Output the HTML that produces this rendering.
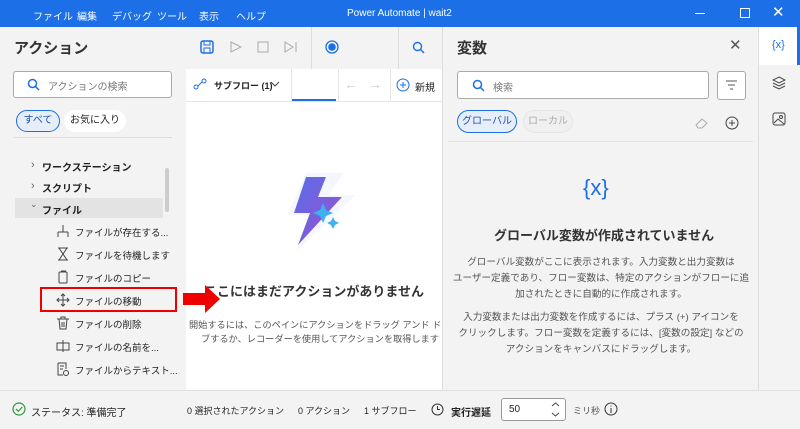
<!DOCTYPE html>
<html><head><meta charset="utf-8"><style>
*{box-sizing:border-box;margin:0;padding:0}
body{width:800px;height:429px;overflow:hidden;font-family:"Liberation Sans","Noto Sans CJK JP",sans-serif;background:#f3f3f3;position:relative;color:#222}
.a{position:absolute}
.t{font-size:11px;white-space:nowrap}
.ic{position:absolute;left:56px}
</style></head><body>
<div class="a" style="left:0;top:0;width:800px;height:27px;background:#1c6fe6;color:#fff">
<span class="a t" style="left:33px;top:8px;font-size:10px">ファイル</span>
<span class="a t" style="left:77px;top:8px;font-size:10px">編集</span>
<span class="a t" style="left:112px;top:8px;font-size:10px">デバッグ</span>
<span class="a t" style="left:157px;top:8px;font-size:10px">ツール</span>
<span class="a t" style="left:199px;top:8px;font-size:10px">表示</span>
<span class="a t" style="left:236px;top:8px;font-size:10px">ヘルプ</span>
<span class="a t" style="left:347px;top:8px;font-size:10px">Power Automate | wait2</span>
<span class="a" style="left:695px;top:13px;width:10px;border-top:1px solid #fff"></span>
<span class="a" style="left:740px;top:8px;width:10px;height:10px;border:1px solid #fff"></span>
<span class="a" style="left:772px;top:3px;font-size:15px">✕</span>
</div>
<!-- left -->
<div class="a t" style="left:14px;top:37px;font-size:15px;font-weight:bold;color:#333">アクション</div>
<div class="a" style="left:13px;top:71px;width:159px;height:27px;background:#fff;border:1px solid #aaa;border-radius:3px"></div>
<svg class="a" style="left:27px;top:78px" width="13" height="13"><circle cx="5.5" cy="5.5" r="4" fill="none" stroke="#1c6fe6" stroke-width="1.5"/><path d="M8.5 8.5L12 12" stroke="#1c6fe6" stroke-width="1.5"/></svg>
<span class="a t" style="left:48px;top:78px;font-size:10px;color:#777">アクションの検索</span>
<div class="a t" style="left:16px;top:110px;width:44px;height:22px;border:1px solid #1c6fe6;border-radius:11px;background:#e6eefa;color:#1c4fb0;font-size:10px;text-align:center;line-height:20px">すべて</div>
<div class="a t" style="left:64px;top:110px;width:62px;height:22px;border-radius:11px;background:#fff;font-size:10px;text-align:center;line-height:22px">お気に入り</div>
<div class="a" style="left:14px;top:137px;width:158px;border-top:1px solid #ddd"></div>
<span class="a t" style="left:31px;top:159px;color:#666">›</span><span class="a t" style="left:42px;top:159px;font-weight:bold;font-size:10px">ワークステーション</span>
<span class="a t" style="left:31px;top:180px;color:#666">›</span><span class="a t" style="left:42px;top:180px;font-weight:bold;font-size:10px">スクリプト</span>
<div class="a" style="left:15px;top:198px;width:148px;height:20px;background:#e3e3e3"></div>
<span class="a t" style="left:30px;top:199px;color:#666;font-size:9px">⌄</span><span class="a t" style="left:42px;top:202px;font-weight:bold;font-size:10px">ファイル</span>
<div class="a" style="left:165px;top:168px;width:4px;height:44px;background:#ccc;border-radius:2px"></div>
<svg class="ic" style="top:224px" width="14" height="14" fill="none" stroke="#444"><path d="M7 1V8M2 8H12M2 8V13M12 8V13"/></svg>
<span class="a t" style="left:75px;top:225px;font-size:9.5px">ファイルが存在する...</span>
<svg class="ic" style="top:247px" width="14" height="14" fill="none" stroke="#444"><path d="M2 1H12M2 13H12M3 1L11 13M11 1L3 13"/></svg>
<span class="a t" style="left:75px;top:248px;font-size:9.5px">ファイルを待機します</span>
<svg class="ic" style="top:270px" width="14" height="14" fill="none" stroke="#444"><rect x="3" y="2" width="8" height="11" rx="1"/><path d="M5 1H10"/></svg>
<span class="a t" style="left:75px;top:271px;font-size:9.5px">ファイルのコピー</span>
<svg class="ic" style="top:293px" width="14" height="14" fill="none" stroke="#444"><path d="M7 1V13M1 7H13M5 3L7 1L9 3M5 11L7 13L9 11M3 5L1 7L3 9M11 5L13 7L11 9"/></svg>
<span class="a t" style="left:75px;top:294px;font-size:9.5px">ファイルの移動</span>
<svg class="ic" style="top:316px" width="14" height="14" fill="none" stroke="#444"><path d="M1 3H13M5 3V1H9V3M3 3L4 13H10L11 3M6 6V11M8 6V11"/></svg>
<span class="a t" style="left:75px;top:317px;font-size:9.5px">ファイルの削除</span>
<svg class="ic" style="top:339px" width="14" height="14" fill="none" stroke="#444"><rect x="1" y="4" width="12" height="7"/><path d="M7 1V13"/></svg>
<span class="a t" style="left:75px;top:340px;font-size:9.5px">ファイルの名前を...</span>
<svg class="ic" style="top:362px" width="14" height="14" fill="none" stroke="#444"><path d="M2 1H10V7M2 1V13H7M4 4H8M4 7H7"/><circle cx="10" cy="11" r="2.5"/></svg>
<span class="a t" style="left:75px;top:363px;font-size:9.5px">ファイルからテキスト...</span>
<!-- middle -->
<div class="a" style="left:186px;top:27px;width:256px;height:363px;background:#fff;overflow:hidden">
<div class="a t" style="left:18px;top:254px;font-size:13px;font-weight:bold;color:#333">ここにはまだアクションがありません</div>
<div class="a t" style="left:3px;top:290px;font-size:9.2px;color:#555">開始するには、このペインにアクションをドラッグ アンド ドロ</div>
<div class="a t" style="left:15px;top:304px;font-size:9.2px;color:#555">ブするか、レコーダーを使用してアクションを取得します</div>
</div>
<div class="a" style="left:186px;top:27px;width:256px;height:42px;background:#f3f3f3"></div>
<div class="a" style="left:186px;top:69px;width:256px;height:33px;background:#fff;border-bottom:1px solid #e6e6e6"></div>
<svg class="a" style="left:200px;top:40px" width="14" height="14"><rect x="1" y="1" width="12" height="12" rx="2" fill="none" stroke="#1c6fe6" stroke-width="1.5"/><rect x="4" y="1" width="6" height="4" fill="none" stroke="#1c6fe6"/><rect x="4" y="8" width="6" height="5" fill="none" stroke="#1c6fe6"/></svg>
<svg class="a" style="left:230px;top:41px" width="12" height="12"><path d="M1 1L11 6L1 11Z" fill="none" stroke="#aaa"/></svg>
<svg class="a" style="left:257px;top:41px" width="12" height="12"><rect x="1" y="1" width="10" height="10" fill="none" stroke="#aaa"/></svg>
<svg class="a" style="left:284px;top:41px" width="14" height="12"><path d="M1 1L9 6L1 11Z M12 1V11" fill="none" stroke="#aaa"/></svg>
<div class="a" style="left:311px;top:27px;width:1px;height:42px;background:#ddd"></div>
<svg class="a" style="left:325px;top:40px" width="14" height="14"><circle cx="7" cy="7" r="6" fill="none" stroke="#1c6fe6" stroke-width="1.3"/><circle cx="7" cy="7" r="3.8" fill="#1c6fe6"/></svg>
<div class="a" style="left:398px;top:27px;width:1px;height:42px;background:#ddd"></div>
<svg class="a" style="left:412px;top:41px" width="13" height="13"><circle cx="5.5" cy="5.5" r="4" fill="none" stroke="#1c6fe6" stroke-width="1.4"/><path d="M8.5 8.5L12 12" stroke="#1c6fe6" stroke-width="1.4"/></svg>
<svg class="a" style="left:193px;top:78px" width="14" height="12"><circle cx="3" cy="9" r="2" fill="none" stroke="#1c6fe6"/><circle cx="11" cy="3" r="2" fill="none" stroke="#1c6fe6"/><path d="M5 8L9 4" stroke="#1c6fe6"/></svg>
<span class="a t" style="left:214px;top:79px;font-size:9px;font-weight:bold">サブフロー (1)</span>
<svg class="a" style="left:270px;top:81px" width="10" height="6"><path d="M1 1L5 5L9 1" fill="none" stroke="#444"/></svg>
<div class="a" style="left:291px;top:69px;width:1px;height:33px;background:#e6e6e6"></div>
<div class="a" style="left:292px;top:99px;width:44px;height:2px;background:#1c6fe6"></div>
<div class="a" style="left:338px;top:69px;width:1px;height:33px;background:#e6e6e6"></div>
<span class="a t" style="left:344px;top:76px;font-size:14px;color:#ccc">←</span>
<span class="a t" style="left:368px;top:76px;font-size:14px;color:#ccc">→</span>
<div class="a" style="left:390px;top:69px;width:1px;height:33px;background:#e6e6e6"></div>
<svg class="a" style="left:396px;top:78px" width="14" height="14"><circle cx="7" cy="7" r="6" fill="none" stroke="#1c6fe6"/><path d="M7 4V10M4 7H10" stroke="#1c6fe6"/></svg>
<span class="a t" style="left:415px;top:79px;font-size:10px">新規</span>
<svg class="a" style="left:266px;top:165px" width="110" height="90"><defs><linearGradient id="g" x1="0" y1="0" x2="1" y2="1"><stop offset="0" stop-color="#5a6ee8"/><stop offset="1" stop-color="#9a4fd0"/></linearGradient></defs><path d="M40 8H78L62 30H90L30 86L44 50H22Z" fill="#f4f7fd"/><path d="M40 12H60L52 32H76L32 80L44 48H28Z" fill="url(#g)"/><path d="M57 38L60 45L67 48L60 51L57 58L54 51L47 48L54 45Z" fill="#3fb0f0"/><path d="M67 52L69 56L73 58L69 60L67 64L65 60L61 58L65 56Z" fill="#3fb0f0"/></svg>
<div class="a" style="left:40px;top:287px;width:137px;height:25px;border:2px solid #e00"></div>
<svg class="a" style="left:183px;top:285px" width="38" height="28"><path d="M0 8H22V0L37 14L22 28V20H0Z" fill="#e00"/></svg>
<!-- right -->
<div class="a" style="left:442px;top:27px;width:1px;height:363px;background:#ddd"></div>
<div class="a t" style="left:457px;top:37px;font-size:15px;font-weight:bold;color:#333">変数</div>
<span class="a t" style="left:729px;top:36px;font-size:15px;color:#555">✕</span>
<div class="a" style="left:457px;top:71px;width:252px;height:28px;background:#fff;border:1px solid #aaa;border-radius:3px"></div>
<svg class="a" style="left:472px;top:79px" width="13" height="13"><circle cx="5.5" cy="5.5" r="4" fill="none" stroke="#1c6fe6" stroke-width="1.5"/><path d="M8.5 8.5L12 12" stroke="#1c6fe6" stroke-width="1.5"/></svg>
<span class="a t" style="left:493px;top:79px;font-size:10px;color:#777">検索</span>
<div class="a" style="left:717px;top:71px;width:29px;height:29px;background:#fff;border:1px solid #aaa;border-radius:3px"></div>
<svg class="a" style="left:725px;top:80px" width="13" height="10"><path d="M1 1H12M3 5H10M5 9H8" stroke="#555"/></svg>
<div class="a t" style="left:457px;top:110px;width:60px;height:23px;border:1px solid #1c6fe6;border-radius:12px;background:#e6eefa;color:#1c4fb0;font-size:10px;text-align:center;line-height:21px">グローバル</div>
<div class="a t" style="left:523px;top:110px;width:50px;height:23px;border-radius:12px;background:#f0f0f0;border:1px solid #e6e6e6;color:#aaa;font-size:10px;text-align:center;line-height:21px">ローカル</div>
<svg class="a" style="left:695px;top:117px" width="14" height="12"><path d="M1 8L7 2L12 6L7 11H3Z" fill="none" stroke="#aaa"/></svg>
<svg class="a" style="left:725px;top:116px" width="14" height="14"><circle cx="7" cy="7" r="6" fill="none" stroke="#444"/><path d="M7 4V10M4 7H10" stroke="#444"/></svg>
<div class="a" style="left:448px;top:141px;width:305px;border-top:1px solid #e0e0e0"></div>
<div class="a t" style="left:583px;top:175px;font-size:22px;color:#1c6fe6">{x}</div>
<div class="a t" style="left:494px;top:225px;font-size:13px;font-weight:bold;color:#333">グローバル変数が作成されていません</div>
<div class="a" style="left:448px;top:255px;width:306px;text-align:center;font-size:9.6px;color:#555;line-height:16px;white-space:nowrap">グローバル変数がここに表示されます。入力変数と出力変数は<br>ユーザー定義であり、フロー変数は、特定のアクションがフローに追<br>加されたときに自動的に作成されます。</div>
<div class="a" style="left:448px;top:310px;width:306px;text-align:center;font-size:9.6px;color:#555;line-height:16px;white-space:nowrap">入力変数または出力変数を作成するには、プラス (+) アイコンを<br>クリックします。フロー変数を定義するには、[変数の設定] などの<br>アクションをキャンバスにドラッグします。</div>
<div class="a" style="left:758px;top:27px;width:42px;height:363px;background:#f3f3f3;border-left:1px solid #ddd"></div>
<div class="a" style="left:759px;top:27px;width:40px;height:38px;background:#fff"></div>
<div class="a" style="left:797px;top:27px;width:3px;height:38px;background:#1c6fe6"></div>
<span class="a t" style="left:772px;top:39px;font-size:11px;color:#1c6fe6">{x}</span>
<svg class="a" style="left:772px;top:76px" width="14" height="14"><path d="M7 1L13 4L7 7L1 4Z M1 7L7 10L13 7 M1 10L7 13L13 10" fill="none" stroke="#444"/></svg>
<svg class="a" style="left:772px;top:112px" width="14" height="14"><rect x="1" y="1" width="12" height="12" rx="2" fill="none" stroke="#444"/><path d="M2 11L6 7L12 12" fill="none" stroke="#444"/><circle cx="9" cy="5" r="1.5" fill="none" stroke="#444"/></svg>
<!-- status -->
<div class="a" style="left:0;top:390px;width:800px;height:39px;background:#f3f3f3;border-top:1px solid #e0e0e0"></div>
<svg class="a" style="left:12px;top:402px" width="14" height="14"><circle cx="7" cy="7" r="6" fill="none" stroke="#2a9a3a" stroke-width="1.2"/><path d="M4 7L6.3 9.3L10.3 5" fill="none" stroke="#2a9a3a" stroke-width="1.2"/></svg>
<span class="a t" style="left:31px;top:404px;font-size:10px">ステータス: 準備完了</span>
<span class="a t" style="left:187px;top:404px;font-size:9px">0 選択されたアクション</span>
<span class="a t" style="left:298px;top:404px;font-size:9px">0 アクション</span>
<span class="a t" style="left:364px;top:404px;font-size:9px">1 サブフロー</span>
<svg class="a" style="left:431px;top:403px" width="13" height="13"><circle cx="6.5" cy="6.5" r="5.5" fill="none" stroke="#333"/><path d="M6.5 3V6.5H9" fill="none" stroke="#333"/></svg>
<span class="a t" style="left:451px;top:404px;font-size:10px;font-weight:bold">実行遅延</span>
<div class="a" style="left:501px;top:398px;width:65px;height:23px;background:#fff;border:1px solid #999;border-radius:3px"></div>
<span class="a t" style="left:509px;top:404px;font-size:10px">50</span>
<svg class="a" style="left:551px;top:401px" width="9" height="17" fill="none" stroke="#444"><path d="M1 5L4.5 2L8 5M1 12L4.5 15L8 12"/></svg>
<span class="a t" style="left:573px;top:404px;font-size:9px;color:#555">ミリ秒</span>
<svg class="a" style="left:604px;top:402px" width="14" height="14"><circle cx="7" cy="7" r="6" fill="none" stroke="#333"/><path d="M7 6V11M7 3.5V4.5" stroke="#333"/></svg>
</body></html>
